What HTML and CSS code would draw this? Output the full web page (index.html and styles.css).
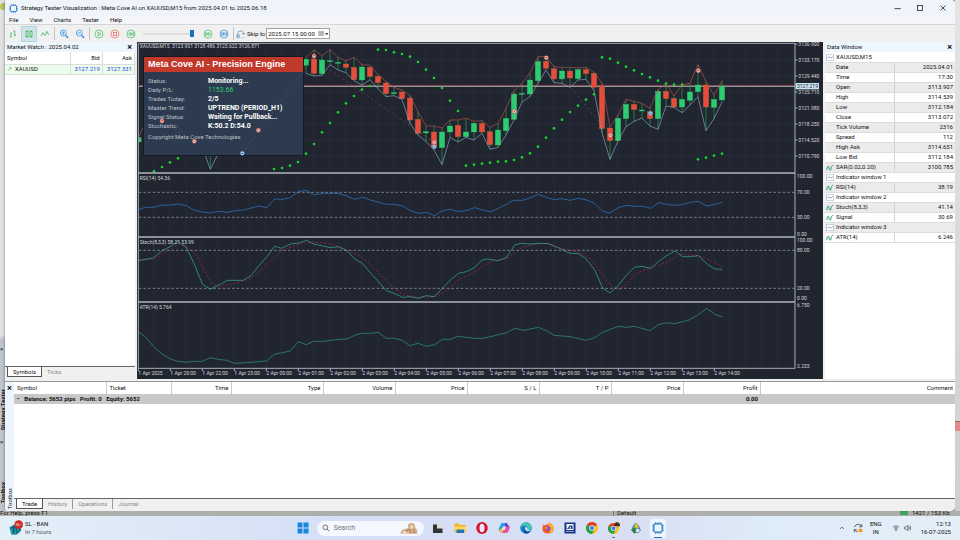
FILE: index.html
```html
<!DOCTYPE html>
<html lang="en">
<head>
    <meta charset="UTF-8">
    <meta name="viewport" content="width=device-width, initial-scale=1.0">
    <title>Strategy Tester Visualization</title>
    <link rel="stylesheet" href="styles.css">
</head>
<body>
    <svg class="defs" aria-hidden="true">
        <symbol id="i-win" viewBox="0 0 12 10"><rect x="1" y="0" width="10" height="10" fill="#fff" stroke="#9db4c8"/><path d="M2 6l2-2 3 2 3-2" fill="none" stroke="#4a7fa8"/></symbol>
        <symbol id="i-ind" viewBox="0 0 12 10"><path d="M1 9l1-5 2-1 1 5 2 1 1-5 3-3" fill="none" stroke="#35977f" stroke-width="1.4"/></symbol>
        <symbol id="i-chip" viewBox="0 0 20 20"><path d="M6 0v20M10 0v20M14 0v20M0 6h20M0 10h20M0 14h20" stroke="#3b93d8" stroke-width="1.4"/><rect x="3" y="3" width="14" height="14" rx="3" fill="#e8f4ff" stroke="#1b74bd" stroke-width="2"/></symbol>
        <symbol id="i-chrome" viewBox="0 0 24 24"><circle cx="12" cy="12" r="12" fill="#fbc116"/><path d="M12 12L1.600 6A12 12 0 0 1 22.400 6z" fill="#e33b2e"/><path d="M12 12L1.600 6A12 12 0 0 0 12 24l5-9z" fill="#1fa04b"/><circle cx="12" cy="12" r="5.500" fill="#fff"/><circle cx="12" cy="12" r="4.200" fill="#3a7de8"/></symbol>
    </svg>

    <div class="desktop">
        <aside class="back-left">
            <span class="app-dot"></span>
            <span class="side-close first">×</span>
            <span class="side-text side-tester">Strategy Tester</span>
            <span class="side-close">×</span>
            <span class="side-text side-toolbox">Toolbox</span>
        </aside>

        <main class="window">
            <header class="titlebar">
                <svg class="title-icon"><use href="#i-chip"/></svg>
                <h1>Strategy Tester Visualization : Meta Cove AI on XAUUSD,M15 from 2025.04.01 to 2025.06.18</h1>
                <div class="window-buttons">
                    <button type="button" aria-label="Minimize"><svg viewBox="0 0 8 8"><path d="M2 4.500h5"/></svg></button>
                    <button type="button" aria-label="Maximize"><svg viewBox="0 0 8 8"><rect x="2" y="2" width="4" height="4"/></svg></button>
                    <button type="button" aria-label="Close"><svg viewBox="0 0 8 8"><path d="M2 2l4 4m0-4l-4 4"/></svg></button>
                </div>
            </header>

            <nav class="menubar">
                <button type="button">File</button>
                <button type="button">View</button>
                <button type="button">Charts</button>
                <button type="button">Tester</button>
                <button type="button">Help</button>
            </nav>

            <div class="toolbar">
                <button type="button" aria-label="Bars"><svg viewBox="0 0 30 30" stroke="#2fa84f"><path d="M9 10v16M5 22h4M9 14h3M20 4v18M16 8h4M20 18h4"/></svg></button>
                <button type="button" class="active" aria-label="Candles"><svg viewBox="0 0 30 30" stroke="#2fa84f"><path d="M9 3v24M21 3v24"/><rect x="6" y="7" width="6" height="16" fill="#d5f2df"/><rect x="18" y="7" width="6" height="16" fill="#d5f2df"/></svg></button>
                <button type="button" aria-label="Line"><svg viewBox="0 0 30 30" stroke="#2fa84f"><path d="M3 21l6-10 6 9 6-13 3 8h4"/></svg></button>
                <i class="sep"></i>
                <button type="button" aria-label="Zoom in"><svg viewBox="0 0 30 30" stroke="#2b86d1"><circle cx="13" cy="12" r="9" fill="#dceefc"/><path d="M13 7v10M8 12h10"/><path d="M20 19l7 8" stroke-width="4"/></svg></button>
                <button type="button" aria-label="Zoom out"><svg viewBox="0 0 30 30" stroke="#2b86d1"><circle cx="13" cy="12" r="9" fill="#dceefc"/><path d="M8 12h10"/><path d="M20 19l7 8" stroke-width="4"/></svg></button>
                <i class="sep"></i>
                <button type="button" aria-label="Play"><svg viewBox="0 0 30 30" stroke="#35b558"><circle cx="15" cy="15" r="12"/><path d="M12 9l9 6-9 6z"/></svg></button>
                <button type="button" aria-label="Stop"><svg viewBox="0 0 30 30" stroke="#e8604c"><circle cx="15" cy="15" r="12"/><rect x="10" y="10" width="10" height="10"/></svg></button>
                <button type="button" aria-label="Slower"><svg viewBox="0 0 30 30" stroke="#35b558"><circle cx="15" cy="15" r="12"/><path d="M14 10l-7 5 7 5zM22 10l-7 5 7 5z"/></svg></button>
                <input class="speed" type="range" min="0" max="100" value="100" aria-label="Speed">
                <button type="button" aria-label="Faster"><svg viewBox="0 0 30 30" stroke="#35b558"><circle cx="15" cy="15" r="12"/><path d="M8 10l7 5-7 5zM16 10l7 5-7 5z"/></svg></button>
                <button type="button" aria-label="To end"><svg viewBox="0 0 30 30" stroke="#2b86d1"><circle cx="15" cy="15" r="12"/><path d="M8 10l6 5-6 5zM14 10l6 5-6 5zM22 9v12"/></svg></button>
                <i class="sep"></i>
                <button type="button" class="skip"><svg viewBox="0 0 30 30" stroke="#4a87b5"><path d="M5 22V14q0-8 9-8t9 8v2M19 12l4 5 4-5M3 18h7v8H3zM15 26h3M22 26h3"/></svg>Skip to</button>
                <span class="date">
                    <input type="text" value="2025.07.15 00:00" aria-label="Skip to date">
                    <button type="button" aria-label="Open calendar"><svg viewBox="0 0 36 24"><path d="M1 3h18v15H1z" fill="#c8c8cc" stroke="#888"/><path d="M1 8h18M7 3v15M13 3v15" stroke="#888"/><path d="M23 9h11l-5 7z" fill="#444" stroke="none"/></svg></button>
                </span>
            </div>

            <div class="workspace">
                <section class="market">
                    <h2 class="panel-title">Market Watch : 2025.04.02 <button type="button" aria-label="Close Market Watch">×</button></h2>
                    <table class="quotes">
                        <thead><tr><th>Symbol</th><th>Bid</th><th>Ask</th></tr></thead>
                        <tbody><tr><td><span class="up">↗</span>XAUUSD</td><td>3127.219</td><td>3127.331</td></tr></tbody>
                    </table>
                    <div class="tabs">
                        <button type="button" class="current">Symbols</button>
                        <button type="button">Ticks</button>
                    </div>
                </section>

                <section class="chart">
                    <svg id="chart" viewBox="0 0 2058 1011" preserveAspectRatio="xMinYMin meet" role="img" aria-label="XAUUSD M15 chart"></svg>
                    <div class="advisor">
                        <h2>Meta Cove AI - Precision Engine</h2>
                        <dl>
                            <dt>Status:</dt><dd>Monitoring...</dd>
                            <dt>Daily P/L:</dt><dd class="profit">1153.66</dd>
                            <dt>Trades Today:</dt><dd>2/5</dd>
                            <dt>Master Trend:</dt><dd>UPTREND (PERIOD_H1)</dd>
                            <dt>Signal Status:</dt><dd>Waiting for Pullback...</dd>
                            <dt>Stochastic:</dt><dd>K:50.2 D:54.0</dd>
                        </dl>
                        <p>Copyright Meta Cove Technologies</p>
                    </div>
                    <svg id="deals" class="deals" viewBox="0 0 2058 1011" preserveAspectRatio="xMinYMin meet" aria-hidden="true"></svg>
                </section>

                <section class="data">
                    <h2 class="panel-title">Data Window <button type="button" aria-label="Close Data Window">×</button></h2>
                    <table class="values">
                        <tbody>
                            <tr class="group"><th colspan="2"><svg><use href="#i-win"/></svg>XAUUSD,M15</th></tr>
                            <tr><th>Date</th><td>2025.04.01</td></tr>
                            <tr><th>Time</th><td>17:30</td></tr>
                            <tr><th>Open</th><td>3113.907</td></tr>
                            <tr><th>High</th><td>3114.539</td></tr>
                            <tr><th>Low</th><td>3112.184</td></tr>
                            <tr><th>Close</th><td>3113.072</td></tr>
                            <tr><th>Tick Volume</th><td>2316</td></tr>
                            <tr><th>Spread</th><td>112</td></tr>
                            <tr><th>High Ask</th><td>3114.651</td></tr>
                            <tr><th>Low Bid</th><td>3112.184</td></tr>
                            <tr class="group"><th><svg><use href="#i-ind"/></svg>SAR(0.02,0.20)</th><td>3100.785</td></tr>
                            <tr class="group"><th colspan="2"><svg><use href="#i-win"/></svg>Indicator window 1</th></tr>
                            <tr class="group"><th><svg><use href="#i-ind"/></svg>RSI(14)</th><td>38.19</td></tr>
                            <tr class="group"><th colspan="2"><svg><use href="#i-win"/></svg>Indicator window 2</th></tr>
                            <tr class="group"><th><svg><use href="#i-ind"/></svg>Stoch(8,3,3)</th><td>41.14</td></tr>
                            <tr class="group"><th><svg><use href="#i-ind"/></svg>Signal</th><td>30.69</td></tr>
                            <tr class="group"><th colspan="2"><svg><use href="#i-win"/></svg>Indicator window 3</th></tr>
                            <tr class="group"><th><svg><use href="#i-ind"/></svg>ATR(14)</th><td>6.246</td></tr>
                        </tbody>
                    </table>
                </section>
            </div>

            <section class="toolbox">
                <div class="toolbox-side">
                    <button type="button" aria-label="Close Toolbox">×</button>
                    <span class="side-text">Toolbox</span>
                </div>
                <div class="toolbox-body">
                    <table class="trades">
                        <colgroup>
                            <col class="c-symbol"><col class="c-ticket"><col class="c-time"><col class="c-type"><col class="c-num"><col class="c-num"><col class="c-num"><col class="c-num"><col class="c-num"><col class="c-profit"><col>
                        </colgroup>
                        <thead>
                            <tr><th>Symbol</th><th>Ticket</th><th>Time</th><th>Type</th><th>Volume</th><th>Price</th><th>S / L</th><th>T / P</th><th>Price</th><th>Profit</th><th>Comment</th></tr>
                        </thead>
                        <tbody>
                            <tr><td colspan="9"><span class="bullet">•</span>Balance: 5652 pips&nbsp;&nbsp; Profit: 0&nbsp;&nbsp; Equity: 5652</td><td>0.00</td><td></td></tr>
                        </tbody>
                    </table>
                    <div class="tabs">
                        <button type="button" class="current">Trade</button>
                        <button type="button">History</button>
                        <button type="button">Operations</button>
                        <button type="button">Journal</button>
                    </div>
                </div>
            </section>
        </main>

        <aside class="back-right"><span class="red-box"></span></aside>
    </div>

    <div class="back-status">
        <span>For Help, press F1</span>
        <span class="profile">Default</span>
        <span class="net"><i></i>1421 / 153 Kb</span>
    </div>

    <footer class="taskbar">
        <div class="widget">
            <svg viewBox="0 0 48 48"><path d="M4 22l14-8 18 4 4 14-14 12H10z" fill="#2497a5"/><path d="M8 26l8-8v20M18 42V20l8 6v14M30 38l8-14" stroke="#0c5570" stroke-width="3" fill="none"/><circle cx="32" cy="14" r="13" fill="#c92b2b"/><text x="32" y="18" font-size="12" text-anchor="middle" fill="#fff">SL•</text></svg>
            <p>SL - BAN<br><span>In 7 hours</span></p>
        </div>

        <div class="apps">
            <button type="button" class="app start" aria-label="Start"><svg viewBox="0 0 24 24"><path d="M1 1h10v10H1zM13 1h10v10H13zM1 13h10v10H1zM13 13h10v10H13z" fill="#1687d9"/></svg></button>
            <label class="search">
                <svg viewBox="0 0 24 24"><circle cx="10" cy="10" r="7"/><path d="M15 15l7 7"/></svg>
                <input type="search" placeholder="Search" aria-label="Search">
                <svg class="lion" viewBox="0 0 48 32"><path d="M1 30q2-13 14-13l7-3q-4-11 6-13 12-1 12 10l6 10v9z" fill="#d6b08d" stroke="none"/><path d="M7 30q1-8 8-6l5 6zM28 8l8 1-3 8-6-3z" fill="#f5dfc5" stroke="none"/><path d="M16 22l10-4 3 10M36 17l3 12" stroke="#8d6b57" stroke-width="2"/></svg>
            </label>
            <button type="button" class="app" aria-label="Task view"><svg viewBox="0 0 24 24"><path d="M8 3h14v13H8z" fill="#ddd"/><path d="M2 5h8v8h11v9H2z" fill="#333"/></svg></button>
            <button type="button" class="app" aria-label="Explorer"><svg viewBox="0 0 24 24"><path d="M1 3h8l3 3h11v15H1z" fill="#f0b323"/><path d="M2 9h21v8H2z" fill="#ffd75e"/><path d="M5 15h15v7H5z" fill="#2374b8"/></svg></button>
            <button type="button" class="app" aria-label="Opera"><svg viewBox="0 0 24 24"><ellipse cx="12" cy="12" rx="11.500" ry="12" fill="#d7142b"/><ellipse cx="12" cy="12" rx="5" ry="8.500" fill="#e5eafa"/></svg></button>
            <button type="button" class="app" aria-label="Copilot"><svg viewBox="0 0 24 24"><path d="M7 2h9l-5 17H5q-5-1-3-7z" fill="#2c9fe0"/><path d="M8 22h9q4-1 7-12-1-4-6-4h-3z" fill="#e056a0"/><path d="M5 13h7l-4 9q-5 0-5-5z" fill="#f2bb3a"/><path d="M14 2h4l3 7-7 2z" fill="#6542ca"/><path d="M10 9h6l-3 7H8z" fill="#f6e9fb"/></svg></button>
            <button type="button" class="app" aria-label="Edge"><svg viewBox="0 0 24 24"><circle cx="12" cy="12" r="11.500" fill="#1878c9"/><path d="M1 11Q3 1 13 1q9 1 10 10 0 6-6 6-4-1-2-4 0-6-7-5-5 0-7 3z" fill="#40c6b2"/><path d="M9 14q1 7 12 5-4 5-10 4-5-5-2-9z" fill="#114a8b"/><path d="M11 10q5 0 4 5-1 2 7 1-5 4-10 1-3-3-1-7z" fill="#dce9f9"/></svg></button>
            <button type="button" class="app" aria-label="Firefox"><svg viewBox="0 0 24 24"><path d="M3 5l3 2q3-3 7-3l2-3q8 5 8 12 0 10-11 10T1 13q0-5 2-8z" fill="#f5532f"/><path d="M15 1q8 5 8 12-1 9-10 10 6-8-2-16 3-1 4-6z" fill="#ffab24"/><circle cx="12" cy="13" r="5" fill="#8750cf"/><path d="M5 10q6-2 7 3l-5 2z" fill="#ff8425"/></svg></button>
            <button type="button" class="app" aria-label="Terminal"><svg viewBox="0 0 24 24"><rect x="1" y="1" width="22" height="22" fill="#17338a"/><path d="M5 4h14v12H5z" fill="#fff"/><path d="M6 14l5-7h6v7z" fill="#17338a"/><path d="M9 13l5-4v4zM4 19h16v1H4z" fill="#fff"/></svg></button>
            <button type="button" class="app" aria-label="Chrome"><svg><use href="#i-chrome"/></svg></button>
            <button type="button" class="app running" aria-label="Chrome, second profile"><svg viewBox="0 0 24 24"><use href="#i-chrome" y="2" width="22" height="22"/><circle cx="18" cy="6" r="6" fill="#daa04a"/><path d="M12 5q6-9 12 0v3H12z" fill="#3a2e28"/></svg></button>
            <button type="button" class="app" aria-label="MetaTrader"><svg viewBox="0 0 24 24"><path d="M3 17Q4 7 12 1q8 6 9 16l-9 5z" fill="#3f8dab"/><path d="M12 1q6 5 5 12l-5 4-4-6z" fill="#e3bd3d"/><path d="M2 15l9-4 4 9-7 3z" fill="#2f7f4b"/><path d="M12 12l9 3-4 7-6-2z" fill="#dfe9f0" stroke="#286295"/></svg></button>
            <button type="button" class="app current" aria-label="Strategy Tester"><svg><use href="#i-chip"/></svg></button>
        </div>

        <div class="tray">
            <svg viewBox="0 0 24 24"><path d="M6 15l6-6 6 6"/></svg>
            <svg class="sync" viewBox="0 0 24 24"><path d="M3 10q3-7 10-7 6 0 8 6M21 3v6h-6M3 22v-6h6M3 16q3 5 8 5"/><circle cx="18" cy="18" r="5" fill="#f09a1e" stroke="none"/></svg>
            <p class="lang">ENG<br>IN</p>
            <svg viewBox="0 0 24 24"><path d="M3 9q9-8 18 0M6 13q6-5 12 0M9 16q3-2 6 0l-3 4z"/></svg>
            <svg viewBox="0 0 24 24"><path d="M2 9h4l6-5v16l-6-5H2zM15 8q3 4 0 8M18 5q5 7 0 14"/></svg>
            <p class="clock">12:13<br>16-07-2025</p>
        </div>
    </footer>

    <script src="chart.js"></script>
</body>
</html>
```

FILE: styles.css
```css
* {
    box-sizing: border-box;
}

body {
    margin: 0;
    height: 100vh;
    display: grid;
    grid-template-rows: minmax(0, 1fr) 5px 24px;
    overflow: hidden;
    background-color: #b1b1ad;
    color: #111;
    font-family: Roboto, "Noto Sans", sans-serif;
    font-size: 6px;
    line-height: 8px;
}

h1, h2, p, dl, dd {
    margin: 0;
    font-size: inherit;
    font-weight: normal;
}

button, input {
    margin: 0;
    padding: 0;
    border: none;
    background: none;
    color: inherit;
    font: inherit;
}

button svg {
    display: block;
    fill: none;
}

table {
    width: 100%;
    border-collapse: collapse;
}

th, td {
    padding: 0;
    font-weight: normal;
    text-align: left;
    white-space: nowrap;
}

.defs {
    position: absolute;
    width: 0;
    height: 0;
}

/* Window behind the tester */
.desktop {
    display: grid;
    grid-template-columns: 5px minmax(0, 1fr) 5px;
    min-height: 0;
}

.back-left {
    display: flex;
    flex-direction: column;
    overflow: hidden;
    background: linear-gradient(#e2e2e2 0 335px, #bfc5cc 340px);
    line-height: 5px;
}

.app-dot {
    width: 5px;
    height: 7px;
    margin: 3px 0 auto;
    border-radius: 4px 0 0 4px;
    background-color: #b9c05e;
}

.side-text {
    writing-mode: vertical-rl;
    transform: rotate(180deg);
}

.side-tester {
    font-weight: bold;
}

.side-close {
    padding: 8px 0 38px;
}

.side-toolbox {
    padding-top: 8px;
    font-weight: bold;
}

.back-right {
    display: flex;
    flex-direction: column;
    justify-content: flex-end;
    background: linear-gradient(#e4e4e4, #cfcfcf);
}

.red-box {
    height: 10px;
    margin-bottom: 80px;
    border-top: 1px solid #777;
    background-color: #e58a8a;
}

.back-status {
    display: flex;
    overflow: hidden;
    background-color: #aeaeaa;
    line-height: 4px;
}

.back-status span {
    flex: 1;
}

.back-status .profile {
    flex: none;
    width: 287px;
    padding-left: 3px;
    border-left: 1px solid #777;
}

.back-status .net {
    flex: none;
    width: 60px;
}

.net i {
    display: inline-block;
    width: 8px;
    height: 4px;
    margin-right: 4px;
    background-color: #3ea05a;
}

/* Tester window */
.window {
    display: grid;
    grid-template-rows: 16px 9px 17px minmax(0, 1fr) 130px;
    min-height: 0;
    overflow: hidden;
    border-radius: 0 4px 5px 3px;
    background-color: #f0f0f0;
    box-shadow: 0 0 3px rgba(0, 0, 0, 0.5);
}

.titlebar {
    display: flex;
    align-items: center;
    padding-left: 4px;
    background-color: #eff4fa;
}

.titlebar h1 {
    flex: 1;
    margin-left: 3px;
}

.title-icon {
    width: 9px;
    height: 9px;
}

.window-buttons {
    display: flex;
    gap: 13px;
    padding-right: 7px;
}

.window-buttons svg {
    width: 10px;
    height: 10px;
    stroke: #333;
    stroke-width: 0.7;
}

.menubar {
    display: flex;
    gap: 11px;
    padding-left: 4px;
    background-color: #f3f5f8;
    border-bottom: 1px solid #d5d5d5;
}

.toolbar {
    display: flex;
    align-items: center;
    padding-left: 0;
}

.toolbar > button {
    padding: 3px;
}

.toolbar > button.active {
    padding: 2px;
    border: 1px solid #b5d4dc;
    background-color: #cfe4e8;
}

.toolbar svg {
    width: 10px;
    height: 10px;
    stroke-width: 2;
}

.sep {
    width: 1px;
    height: 13px;
    margin: 0 1px;
    background-color: #c4c4c4;
}

.speed {
    width: 51px;
    margin: 0 6px 0 4px;
    height: 8px;
    appearance: none;
    background: linear-gradient(#ddd, #ddd) center / 100% 2px no-repeat;
}

.speed::-webkit-slider-thumb {
    appearance: none;
    width: 4px;
    height: 7px;
    background-color: #0f73bd;
}

.toolbar .skip {
    display: flex;
    align-items: center;
    gap: 1px;
    padding: 3px 1px;
}

.date {
    display: flex;
    align-items: center;
    width: 64px;
    height: 11px;
    border: 1px solid #a0a0a0;
    background-color: #fff;
}

.date input {
    width: 51px;
    padding-left: 1px;
}

.date .date-button,
.date svg {
    width: 11px;
    height: 8px;
    stroke-width: 1;
}

.workspace {
    display: grid;
    grid-template-columns: 130px minmax(0, 1fr) 130px;
    gap: 2px;
    padding-bottom: 2px;
    min-height: 0;
}

.panel-title {
    display: flex;
    justify-content: space-between;
    padding: 1px 3px 1px 2px;
    background-color: #edf5fd;
}

.panel-title button,
.toolbox-side button {
    font-size: 9px;
    font-weight: bold;
}

.market {
    display: flex;
    flex-direction: column;
    background-color: #fff;
}

.quotes th,
.quotes td {
    height: 12px;
    padding: 0 2px;
    border-right: 1px solid #ddd;
    border-bottom: 1px solid #ddd;
}

.quotes th:first-child {
    width: 65px;
}

.quotes th + th,
.quotes td + td {
    text-align: right;
}

.quotes td {
    height: 10px;
    background-color: #edfdeb;
}

.quotes td + td {
    color: #2547df;
}

.up {
    margin-right: 3px;
    color: #2fa84f;
}

.tabs {
    display: flex;
    margin-top: auto;
    padding: 0 0 2px 2px;
    border-top: 1px solid #666;
    background-color: #f0f0f0;
}

.tabs button {
    height: 10px;
    padding: 0 5px;
    color: #888;
}

.tabs .current {
    padding: 0 5px;
    border: 1px solid #555;
    border-top: none;
    background-color: #fff;
    color: #111;
}

.data {
    background-color: #fff;
}

.values th,
.values td {
    height: 10px;
    border-bottom: 1px solid #ddd;
}

.values th {
    padding-left: 11px;
}

.values .group th {
    padding-left: 1px;
}

.values td {
    width: 61px;
    padding-right: 2px;
    border-left: 1px solid #d0d0d0;
    text-align: right;
}

.values tr:nth-child(even) {
    background-color: #ebebeb;
}

.values svg {
    width: 8px;
    height: 7px;
    margin-right: 2px;
    vertical-align: middle;
}

/* Chart */
.chart {
    position: relative;
    background-color: #202530;
}

#chart,
.deals {
    display: block;
    width: 100%;
    height: 100%;
}

.deals {
    position: absolute;
    inset: 0;
}

.chart text {
    fill: #d5d8dc;
    font-family: Roboto, sans-serif;
    font-size: 15px;
}

.grid {
    stroke: #2b313c;
    stroke-width: 2;
}

.frame {
    fill: none;
    stroke: #a9adb3;
    stroke-width: 3;
}

.divider {
    stroke: #8c9097;
    stroke-width: 6;
}

.level {
    stroke: #a4a8ac;
    stroke-width: 2;
    stroke-dasharray: 8 6;
}

.series {
    fill: none;
    stroke-width: 2;
}

.advisor {
    position: absolute;
    top: 14px;
    left: 6px;
    width: 161px;
    height: 100px;
    border: 1px solid #151a22;
    background-color: #2c3b50;
    color: #bdc3c7;
}

.advisor h2 {
    padding-left: 4px;
    background-color: #c0392b;
    color: #fff;
    font-family: "Liberation Sans", Arial, sans-serif;
    font-size: 9px;
    font-weight: bold;
    line-height: 15px;
}

.advisor dl {
    display: grid;
    grid-template-columns: 60px 1fr;
    grid-auto-rows: 9px;
    align-items: baseline;
    padding: 4px 4px 3px;
    line-height: 9px;
}

.advisor dd {
    color: #fff;
    font-size: 7px;
    font-weight: bold;
}

.advisor .profit {
    color: #2ecc71;
    font-weight: normal;
}

.advisor p {
    padding-left: 4px;
}

/* Toolbox */
.toolbox {
    display: grid;
    grid-template-columns: 9px minmax(0, 1fr);
    border-top: 1px solid #999;
}

.toolbox-side {
    display: flex;
    flex-direction: column;
    justify-content: space-between;
    align-items: center;
    padding: 2px 0;
    background-color: #edf5fd;
}

.toolbox-body {
    display: flex;
    flex-direction: column;
    background-color: #fff;
}

.trades {
    table-layout: fixed;
}

.trades th {
    height: 12px;
    padding: 0 2px 0 3px;
    border-right: 1px solid #ccc;
    text-align: right;
}

.trades th:nth-child(-n+2) {
    text-align: left;
}

.trades th:last-child {
    border: none;
}

.trades td {
    height: 10px;
    padding: 0 2px 0 3px;
    background-color: #c8c8c8;
    font-weight: bold;
}

.trades td + td {
    text-align: right;
}

.bullet {
    margin-right: 5px;
}

.c-symbol { width: 92px; }
.c-ticket { width: 65px; }
.c-time { width: 60px; }
.c-type { width: 92px; }
.c-num { width: 72px; }
.c-profit { width: 77px; }

.toolbox .tabs button:not(.current) + button {
    border-left: 1px solid #999;
}

/* Taskbar */
.taskbar {
    display: grid;
    grid-template-columns: 1fr auto 1fr;
    align-items: center;
    background: linear-gradient(90deg, #e4f0f8, #d5dff6 35%, #d8dff4 65%, #deebf8 80%, #e4eff8);
}

.widget {
    display: flex;
    gap: 1px;
    padding-left: 8px;
}

.widget svg {
    width: 16px;
    height: 16px;
}

.widget span {
    color: #555;
}

.apps {
    display: flex;
    align-items: center;
    gap: 6px;
}

.app {
    display: grid;
    place-items: center;
    width: 16px;
    height: 19px;
}

.app svg {
    width: 12px;
    height: 12px;
}

.app.running {
    background: linear-gradient(#777, #777) bottom / 3px 1px no-repeat;
}

.app.current {
    border-radius: 2px;
    background: linear-gradient(#1673c0, #1673c0) bottom / 8px 1px no-repeat #edf4fc;
}

.search {
    display: flex;
    align-items: center;
    width: 107px;
    height: 15px;
    padding: 0 6px 0 5px;
    border-radius: 8px;
    background-color: #f4f7fd;
}

.search svg {
    width: 8px;
    height: 8px;
    fill: none;
    stroke: #333;
    stroke-width: 2;
}

.search input {
    flex: 1;
    min-width: 0;
    padding-left: 4px;
    font-size: 7px;
}

.search .lion {
    width: 18px;
    height: 13px;
}

.tray {
    display: flex;
    align-items: center;
    justify-content: flex-end;
    gap: 4px;
    padding-right: 9px;
}

.tray svg {
    width: 8px;
    height: 8px;
    fill: none;
    stroke: #444;
    stroke-width: 2;
}

.tray .sync {
    width: 10px;
    height: 10px;
    margin: 0 3px;
}

.lang {
    margin-right: 6px;
    text-align: center;
}

.clock {
    margin-left: 5px;
    text-align: right;
}
```

FILE: chart.js
```js
const NS = 'http://www.w3.org/2000/svg';
const chart = document.getElementById('chart');
const deals = document.getElementById('deals');

const FIRST = 507;  // x of candle 0
const STEP = 24;
const TOP = -6;
const SUB = 384;    // y origin of the indicator panes
const UP = '#2ecc71';
const DOWN = '#e74c3c';

function add(parent, tag, attrs, text) {
    const el = document.createElementNS(NS, tag);
    for (const key in attrs) el.setAttribute(key, attrs[key]);
    if (text) el.textContent = text;
    parent.appendChild(el);
    return el;
}

function line(x1, y1, x2, y2, cls) {
    return add(chart, 'path', { d: `M${x1} ${y1}L${x2} ${y2}`, class: cls });
}

// body top, body bottom, high, low, up
const candles = [
    [58, 76, 52, 100, 1], [57, 100, 30, 108, 0], [60, 101, 47, 106, 1], [62, 65, 29, 74, 1],
    [67, 70, 52, 90, 1], [72, 82, 62, 98, 0], [82, 119, 52, 122, 0], [81, 120, 74, 135, 1],
    [82, 110, 76, 119, 0], [109, 128, 104, 146, 0], [129, 161, 124, 170, 0], [158, 161, 142, 167, 1],
    [156, 176, 150, 178, 0], [174, 240, 166, 250, 0], [238, 280, 215, 285, 0], [275, 279, 258, 304, 1],
    [276, 322, 258, 330, 0], [276, 323, 264, 374, 1], [258, 276, 240, 292, 1], [256, 290, 240, 306, 0],
    [276, 290, 235, 292, 1], [250, 276, 244, 300, 1], [250, 276, 242, 280, 0], [275, 314, 262, 328, 0],
    [270, 315, 250, 322, 1], [235, 272, 205, 285, 1], [162, 238, 152, 240, 1], [160, 163, 130, 186, 1],
    [120, 162, 98, 170, 1], [64, 122, 50, 130, 1], [64, 85, 50, 90, 0], [86, 117, 80, 128, 0],
    [93, 117, 82, 130, 1], [93, 114, 82, 142, 0], [89, 116, 84, 120, 1], [89, 101, 82, 118, 0],
    [100, 142, 97, 152, 0], [138, 266, 130, 278, 0], [264, 302, 261, 358, 0], [235, 302, 225, 303, 1],
    [193, 236, 178, 260, 1], [193, 209, 184, 244, 0], [210, 213, 190, 234, 1], [215, 236, 205, 258, 0],
    [154, 236, 148, 268, 1], [154, 176, 132, 198, 0], [175, 201, 168, 202, 0], [178, 201, 134, 218, 1],
    [156, 181, 130, 195, 1], [135, 155, 74, 170, 1], [135, 201, 125, 272, 0], [178, 202, 166, 236, 1],
    [138, 180, 122, 186, 1]
];

// parabolic SAR runs: first candle index, then y values
const sar = [
    [-19, [394, 381, 367, 355]],
    [-4, [387, 384, 377, 366, 341, 312, 277, 249, 217, 190, 168, 149, 138]],
    [9, [29, 30, 37, 42, 50, 66, 89, 114, 144, 182, 213]],
    [20, [377, 374, 371, 368, 365, 364, 360, 352, 340, 320, 293, 265, 239, 216, 197, 179, 163]],
    [37, [52, 56, 68, 80, 91, 102, 112, 122, 131, 134, 134]],
    [49, [358, 353, 347, 341]]
];

const rsi = '5,119 24,112 50,112 70,106 100,105 125,102 148,107 170,120 195,126 220,129 245,124 270,127 295,122 320,120 365,108 390,113 412,87 435,88 458,84 484,65 508,61 532,75 556,70 600,70 628,77 652,88 678,82 700,90 748,103 772,103 798,108 820,122 845,130 868,127 893,137 915,123 940,118 965,125 990,121 1012,113 1036,119 1060,126 1084,115 1109,103 1129,91 1156,91 1179,84 1204,73 1229,82 1251,89 1274,86 1299,91 1324,85 1349,90 1374,101 1397,124 1419,129 1444,113 1469,106 1494,109 1519,109 1541,115 1564,98 1589,103 1614,106 1639,103 1661,97 1684,94 1709,108 1734,103 1756,97';
const stoch = '5,272 50,263 78,240 100,230 122,214 148,232 172,283 196,342 220,358 245,345 272,331 318,331 342,317 365,288 390,260 413,229 435,235 460,222 485,219 508,211 530,222 580,233 605,230 630,242 652,266 676,280 700,308 748,362 772,370 796,382 820,380 843,385 868,377 892,380 915,356 940,330 965,310 988,305 1012,293 1035,270 1050,267 1084,272 1109,262 1133,225 1151,220 1179,222 1204,220 1234,221 1274,238 1299,250 1324,251 1347,266 1373,300 1397,354 1419,369 1444,346 1469,315 1492,292 1514,289 1541,295 1564,275 1589,257 1614,243 1636,260 1659,260 1684,257 1709,281 1733,297 1756,298';
const signal = '5,268 50,268 100,238 125,222 150,232 175,250 198,293 222,337 245,349 290,342 342,325 365,308 413,262 435,242 485,222 530,216 580,222 630,240 676,262 724,308 772,354 796,374 843,382 892,380 915,372 940,354 965,328 1012,308 1035,290 1059,276 1109,266 1156,232 1204,220 1234,221 1274,235 1324,246 1359,265 1384,295 1407,330 1429,352 1449,358 1469,342 1499,310 1541,294 1589,277 1629,253 1684,257 1719,270 1756,290';
const atr = '5,486 24,500 50,530 76,553 100,567 122,574 148,577 172,574 196,574 220,563 245,568 270,571 293,580 340,577 388,573 412,553 460,543 484,515 508,524 530,514 556,514 605,508 630,507 655,495 676,490 700,490 724,487 748,505 772,505 796,511 818,527 843,520 868,529 893,524 916,508 940,508 963,499 1010,505 1035,505 1060,500 1109,488 1133,475 1159,481 1204,472 1229,482 1251,496 1299,500 1347,511 1373,503 1397,487 1444,469 1469,472 1492,469 1539,482 1564,464 1589,458 1614,461 1656,450 1684,434 1709,415 1734,433 1756,441';

// grid
for (let x = 51; x < 1974; x += 48) line(x, 6, x, 978, 'grid');
for (let y = 54; y < 390; y += 48) line(5, y, 1974, y, 'grid');

// price pane
line(5, 130, 1974, 130, 'series').setAttribute('stroke', '#b8454c');
line(5, 133, 1974, 133, 'frame');

const x = i => FIRST + STEP * i;
const highs = candles.map((c, i) => `${x(i)},${c[2] + TOP}`).join(' ');
const lows = candles.map((c, i) => `${x(i)},${c[3] + TOP}`).join(' ');

candles.forEach(([top, bottom, high, low, up], i) => {
    line(x(i), high + TOP, x(i), low + TOP, 'series').setAttribute('stroke', '#24a54c');
    add(chart, 'rect', { x: x(i) - 8, y: top + TOP, width: 16, height: bottom - top, fill: up ? UP : DOWN, stroke: up ? UP : '#b8702f', 'stroke-width': 1 });
});
add(chart, 'rect', { x: 5, y: 286, width: 8, height: 14, fill: UP });
add(chart, 'polyline', { points: highs, class: 'series', stroke: '#b5524f' });
add(chart, 'polyline', { points: lows, class: 'series', stroke: '#8ba6be' });
add(chart, 'polyline', { points: '5,285 24,245', class: 'series', stroke: '#b5524f' });
add(chart, 'polyline', { points: '201,330 220,382 246,330', class: 'series', stroke: '#8ba6be' });
line(220, 330, 220, 382, 'series').setAttribute('stroke', '#24a54c');

for (const [start, ys] of sar) {
    ys.forEach((y, n) => add(chart, 'circle', { cx: x(start + n), cy: y + TOP, r: 4, fill: '#19d42c' }));
}

// indicator panes
const panes = add(chart, 'g', { transform: `translate(0 ${SUB})` });
add(panes, 'polyline', { points: rsi, class: 'series', stroke: '#2f7fd0' });
add(panes, 'polyline', { points: signal, class: 'series', stroke: '#c02b3d', 'stroke-dasharray': '6 6' });
add(panes, 'polyline', { points: stoch, class: 'series', stroke: '#3bb0a2' });
add(panes, 'polyline', { points: atr, class: 'series', stroke: '#309c92' });

for (const y of [451, 526, 625, 739]) line(5, y, 1974, y, 'level');
for (const y of [393, 585, 780]) line(3, y, 1974, y, 'divider');
add(chart, 'path', { d: 'M4 979V4H1974V979H4', class: 'frame' });

// captions
const captions = [
    [8, 18, 'XAUUSD,M15\u00a0 3123.951 3128.486 3123.622 3126.871'],
    [8, 413, 'RSI(14) 54.36'],
    [8, 606, 'Stoch(8,3,3) 58.21 53.99'],
    [8, 800, 'ATR(14) 5.764']
];
captions.forEach(([cx, cy, text]) => add(chart, 'text', { x: cx, y: cy }, text));

// value axis
['3136.900', '3133.170', '3129.440', '3125.710', '3121.980', '3118.250', '3114.520', '3110.790'].forEach((text, i) => {
    const y = 6 + i * 48;
    line(1974, y, 1982, y, 'frame');
    add(chart, 'text', { x: 1984, y: y + 6 }, text);
});
add(chart, 'rect', { x: 1976, y: 123, width: 70, height: 19, fill: '#c9e4f0' });
add(chart, 'text', { x: 1980, y: 138, style: 'fill: #223' }, '3127.219');
[[407, '100.00'], [457, '70.00'], [532, '30.00'], [581, '0.00'], [600, '100.00'], [631, '80.00'], [745, '20.00'], [774, '0.00'], [794, '6.750'], [977, '2.233']]
    .forEach(([y, text]) => add(chart, 'text', { x: 1980, y }, text));

// time axis
const times = ['1 Apr 2025', '1 Apr 20:00', '1 Apr 22:00', '1 Apr 23:00'];
for (let h = 0; h <= 14; h++) times.push(`2 Apr ${String(h).padStart(2, '0')}:00`);
times.forEach((text, i) => {
    line(4 + i * 96, 979, 4 + i * 96, 987, 'frame');
    add(chart, 'text', { x: 4 + i * 96, y: 999 }, text);
});

// deals are drawn over the advisor panel
const trades = [[75, 237, 0], [172, 298, 0], [364, 265, 0], [316, 334, 1], [531, 42, 0], [892, 301, 0], [892, 314, 1], [1132, 208, 0], [1228, 47, 0], [1420, 280, 0], [1540, 214, 1], [1684, 86, 0]];
['M75 237L172 298', 'M316 334L531 42', 'M579 84L892 301', 'M1228 47L1420 280'].forEach(d =>
    add(deals, 'path', { d, class: 'series', stroke: '#8d454e', 'stroke-dasharray': '6 9' }));
for (const [cx, cy, buy] of trades) {
    add(deals, 'circle', { cx, cy, r: 6, fill: '#f4e8e4', stroke: buy ? '#3b7fc4' : '#c8503f', 'stroke-width': 2 });
    add(deals, 'path', { d: buy ? `M${cx - 4} ${cy + 2}l4 -5 4 5z` : `M${cx - 4} ${cy - 2}l4 5 4 -5z`, fill: buy ? '#2266b0' : '#c0392b' });
}
```
